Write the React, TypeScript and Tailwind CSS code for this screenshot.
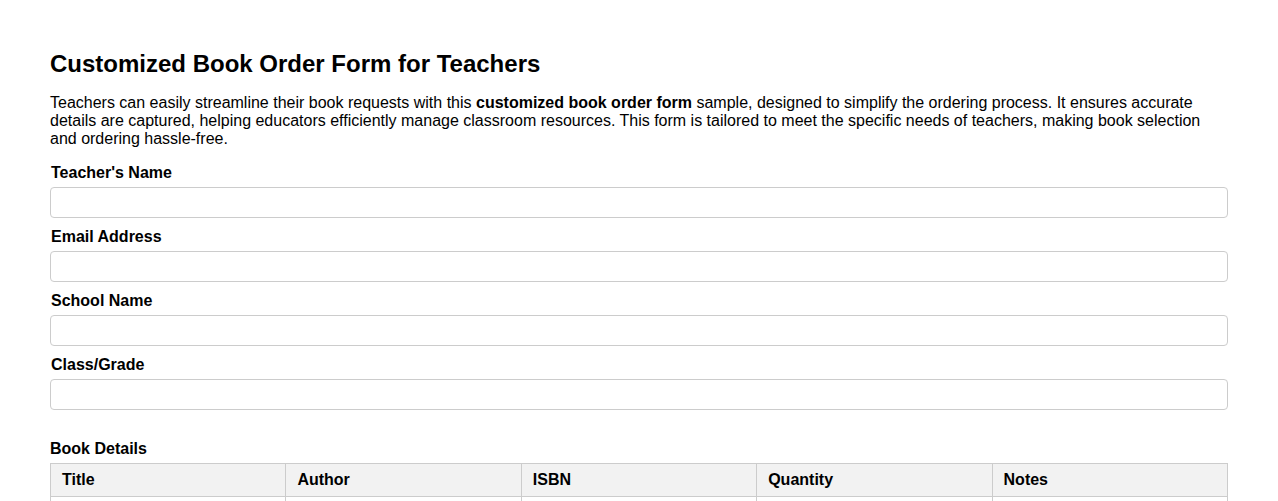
import React from "react";

const fields = ["Teacher's Name", "Email Address", "School Name", "Class/Grade"];
const cols = ["Title", "Author", "ISBN", "Quantity", "Notes"];

export default function App() {
  return (
    <div className="min-h-screen bg-white px-[50px] pt-[50px] pb-10 text-black" style={{ fontFamily: '"Liberation Sans", Arial, sans-serif' }}>
      <h1 className="text-[24px] leading-[28px] font-bold">Customized Book Order Form for Teachers</h1>
      <p className="mt-[16px] text-[16px] leading-[18px]">
        Teachers can easily streamline their book requests with this <strong>customized book order form</strong> sample, designed to simplify the ordering process. It ensures accurate details are captured, helping educators efficiently manage classroom resources. This form is tailored to meet the specific needs of teachers, making book selection and ordering hassle-free.
      </p>
      <div className="mt-[16px]">
        {fields.map((f) => (
          <div key={f} className="mb-[10px]">
            <label className="block text-[16px] leading-[18px] font-bold pl-px">{f}</label>
            <input type="text" className="mt-[5px] block w-full h-[31px] border border-[#cccccc] rounded-[4px] px-2 text-[14px]" />
          </div>
        ))}
      </div>
      <div className="mt-[30px] text-[16px] leading-[18px] font-bold">Book Details</div>
      <table className="mt-[5px] w-full table-fixed border-collapse text-[16px] leading-[18px]">
        <thead>
          <tr className="bg-[#f2f2f2]">
            {cols.map((c) => (
              <th key={c} className="border border-[#cccccc] px-[11px] py-[7px] text-left font-bold">{c}</th>
            ))}
          </tr>
        </thead>
        <tbody>
          {[0, 1].map((r) => (
            <tr key={r}>
              {cols.map((c) => (
                <td key={c} className="border border-[#cccccc] px-[11px] py-[7px] h-[40px]"></td>
              ))}
            </tr>
          ))}
        </tbody>
      </table>
    </div>
  );
}
